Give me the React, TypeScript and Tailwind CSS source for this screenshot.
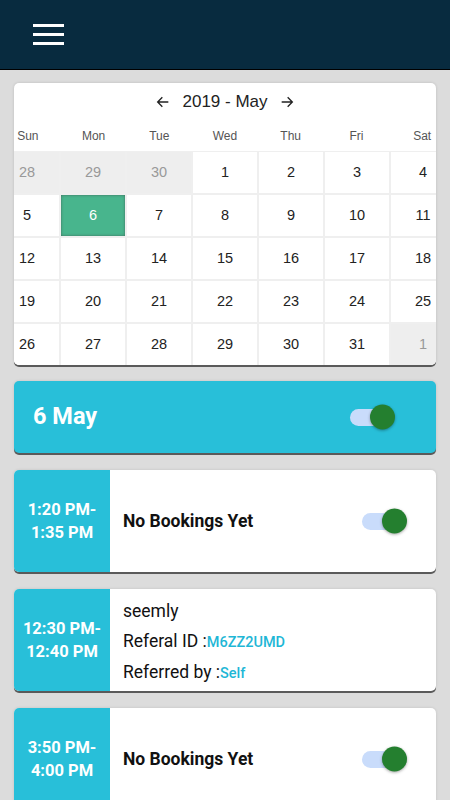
import { useState } from 'react';

const weekHeaders = ['Sun', 'Mon', 'Tue', 'Wed', 'Thu', 'Fri', 'Sat'];

// 5 weeks shown, May 2019
const calendarDays: { day: number; outside?: boolean }[] = [
  { day: 28, outside: true },
  { day: 29, outside: true },
  { day: 30, outside: true },
  ...Array.from({ length: 31 }, (_, i) => ({ day: i + 1 })),
  { day: 1, outside: true },
];

function Toggle({ on = true }: { on?: boolean }) {
  return (
    <div className="relative w-[44px] h-[17px] rounded-full bg-[#c9dcfb]">
      <span
        className={`absolute top-1/2 -translate-y-1/2 w-[25px] h-[25px] rounded-full bg-[#247f2f] shadow-[0_1px_3px_rgba(0,0,0,0.35)] ${on ? 'right-[-1px]' : 'left-[-1px]'}`}
      />
    </div>
  );
}

function TimeSlot({ from, to, children }: { from: string; to: string; children: React.ReactNode }) {
  return (
    <div className="flex h-[102px] rounded-[5px] overflow-hidden bg-white shadow-[0_2px_0_#5a5a5a,0_0_3px_rgba(0,0,0,0.12)]">
      <div className="w-[96px] shrink-0 bg-[#28bfd9] flex flex-col items-center justify-center text-white font-bold text-[16.5px] leading-[23px]">
        <span>{from}</span>
        <span>{to}</span>
      </div>
      <div className="flex-1 pl-[13px]">{children}</div>
    </div>
  );
}

function NoBookings() {
  return (
    <div className="h-full flex items-center justify-between pr-[30px]">
      <span className="text-[17.5px] font-bold text-[#111]">No Bookings Yet</span>
      <Toggle />
    </div>
  );
}

export default function App() {
  const [selected] = useState(6);

  return (
    <div className="min-h-screen bg-[#dcdcdc] font-['Roboto','Liberation_Sans',sans-serif]">
      {/* 顶栏 */}
      <div className="h-[70px] bg-[#082b3f] border-b border-black flex items-center pl-[33px]">
        <div className="flex flex-col gap-[6px] -mt-[1px]">
          <span className="block w-[31px] h-[3px] bg-white" />
          <span className="block w-[31px] h-[3px] bg-white" />
          <span className="block w-[31px] h-[3px] bg-white" />
        </div>
      </div>

      <div className="px-[14px] pt-[13px] pb-[20px] flex flex-col">
        {/* 日历 */}
        <div className="bg-white rounded-[5px] overflow-hidden shadow-[0_2px_0_#5a5a5a,0_0_3px_rgba(0,0,0,0.15)] font-['Liberation_Sans','Arial',sans-serif]">
          <div className="h-[37px] flex items-center justify-center gap-[11px] pt-[1px] text-[#222]">
            <svg width="16" height="16" viewBox="0 0 24 24" fill="none" stroke="#222" strokeWidth="2">
              <path d="M20 12H4M11 5l-7 7 7 7" />
            </svg>
            <span className="text-[17px]">2019 - May</span>
            <svg width="16" height="16" viewBox="0 0 24 24" fill="none" stroke="#222" strokeWidth="2">
              <path d="M4 12h16M13 5l7 7-7 7" />
            </svg>
          </div>

          <div className="w-[460px] -ml-[19px]">
            <div className="grid grid-cols-7 h-[31px] items-center">
              {weekHeaders.map((w) => (
                <div key={w} className="text-center text-[12px] text-[#555]">
                  {w}
                </div>
              ))}
            </div>
            <div className="grid grid-cols-7 gap-[2px] bg-[#efefef] pt-[1px]">
              {calendarDays.map((d, idx) => {
                const isSel = !d.outside && d.day === selected;
                return (
                  <div
                    key={idx}
                    className={`h-[41px] flex items-center justify-center text-[14.5px] ${
                      d.outside
                        ? 'bg-[#eeeeee] text-[#999]'
                        : isSel
                          ? 'bg-[#48b58d] text-white shadow-[inset_0_0_3px_rgba(60,60,60,0.6)]'
                          : 'bg-white text-[#222]'
                    }`}
                  >
                    {d.day}
                  </div>
                );
              })}
            </div>
          </div>
        </div>

        {/* 当天 */}
        <div className="mt-[16px] h-[72px] rounded-[5px] bg-[#28bfd9] shadow-[0_2px_0_#5a5a5a,0_0_3px_rgba(0,0,0,0.12)] flex items-center justify-between pl-[19px] pr-[42px]">
          <span className="text-white font-bold text-[23.5px]">6 May</span>
          <Toggle />
        </div>

        <div className="mt-[17px] flex flex-col gap-[17px]">
          <TimeSlot from="1:20 PM-" to="1:35 PM">
            <NoBookings />
          </TimeSlot>

          <TimeSlot from="12:30 PM-" to="12:40 PM">
            <div className="pt-[12px] flex flex-col gap-[9px] text-[17.5px] text-[#111] leading-[21px]">
              <span>seemly</span>
              <span>
                Referal ID :<span className="text-[14.5px] font-medium text-[#1fb7d6]">M6ZZ2UMD</span>
              </span>
              <span>
                Referred by :<span className="text-[14.5px] font-medium text-[#1fb7d6]">Self</span>
              </span>
            </div>
          </TimeSlot>

          <TimeSlot from="3:50 PM-" to="4:00 PM">
            <NoBookings />
          </TimeSlot>
        </div>
      </div>
    </div>
  );
}
